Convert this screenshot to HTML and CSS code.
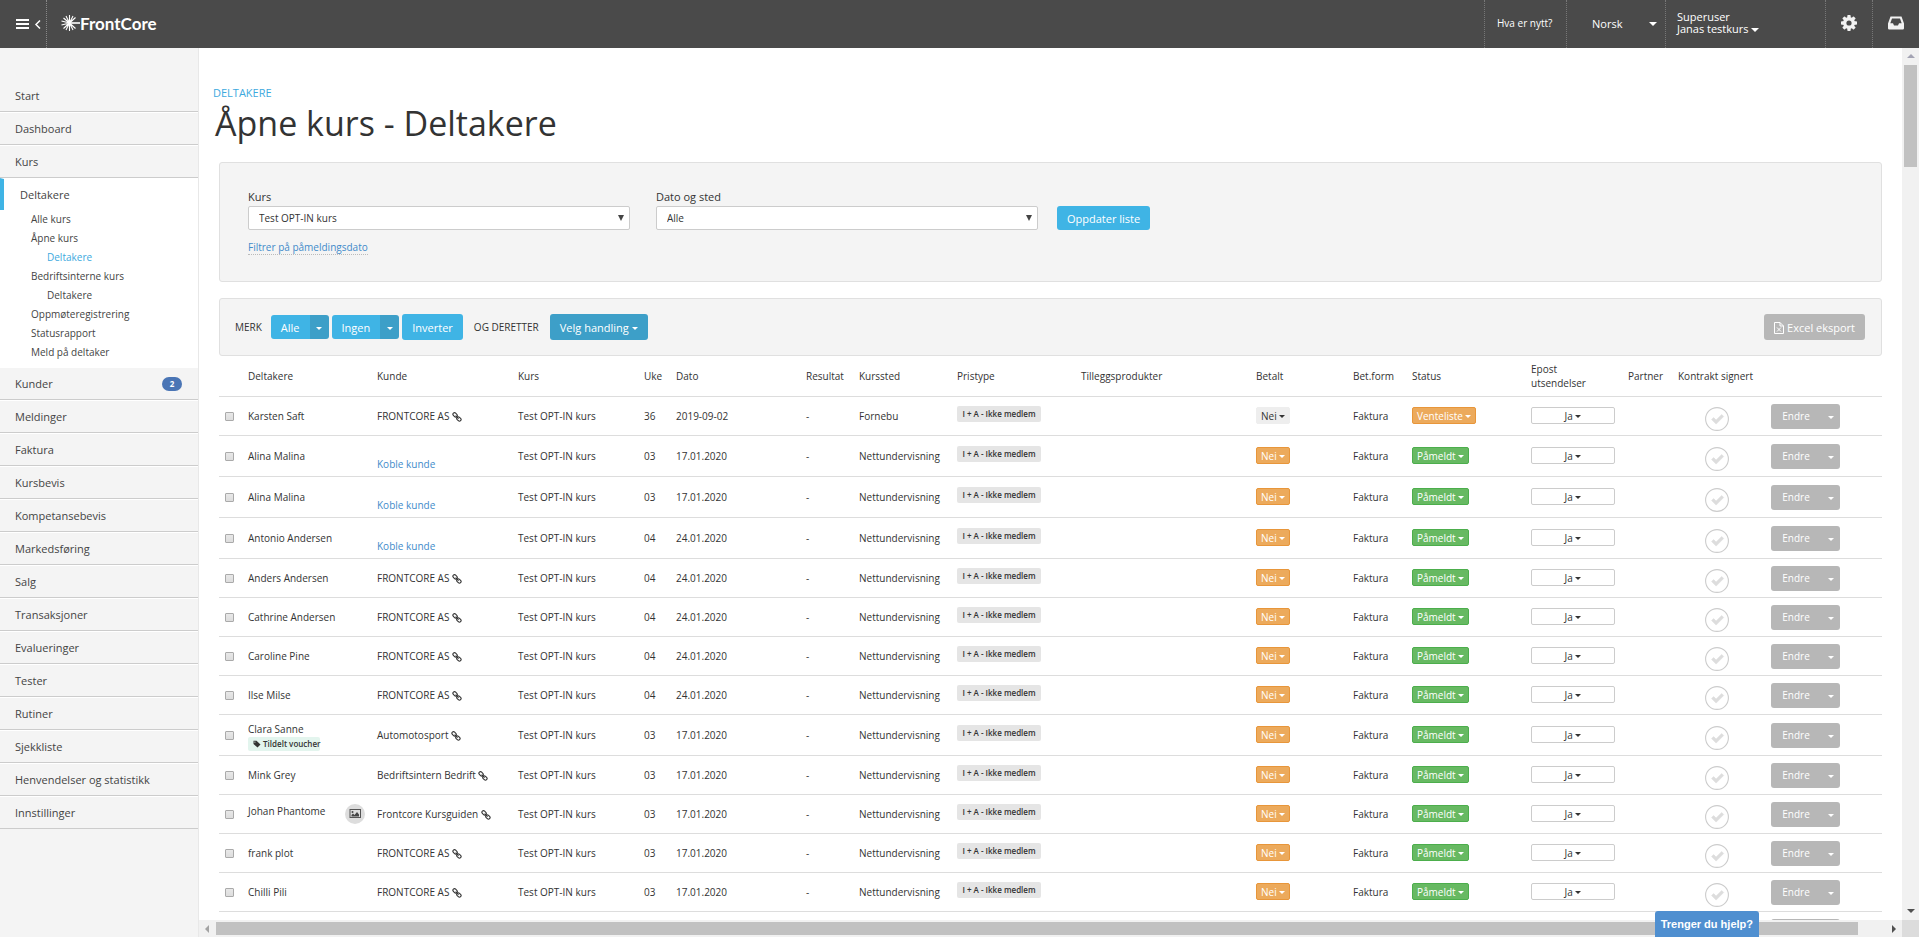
FILE: index.html
```html
<!DOCTYPE html>
<html lang="no">
<head>
    <meta charset="UTF-8">
    <meta name="viewport" content="width=device-width, initial-scale=1.0">
    <title>FrontCore - Deltakere</title>
    <link rel="stylesheet" href="styles.css">
</head>
<body>
    <!-- icons -->
    <svg class="sprite" aria-hidden="true">
        <symbol id="link" viewBox="0 0 10 10">
            <g fill="none" stroke="currentColor" stroke-width="1.1">
                <rect x="0.7" y="1.3" width="4.8" height="3.2" rx="1.6" transform="rotate(45 3.1 2.9)"/>
                <rect x="4.5" y="5.4" width="4.8" height="3.2" rx="1.6" transform="rotate(45 6.9 7)"/>
                <path d="M3.6 3.6l3 3"/>
            </g>
        </symbol>
        <symbol id="check" viewBox="0 0 24 24">
            <circle cx="12" cy="12" r="11.4" fill="none" stroke="#ccc" stroke-width="1.1"/>
            <path d="M6.6 12.6l2-2 2.5 2.5 5.6-5.6 2 2-7.6 7.6z" fill="#ddd" stroke="#ddd" stroke-width="0.6"/>
        </symbol>
        <symbol id="tag" viewBox="0 0 8 8">
            <path d="M0.5 0.8h3l4 3.6-3 3.2L0.5 4z" fill="currentColor"/>
            <circle cx="1.9" cy="2.1" r="0.6" fill="#e3f5ee"/>
        </symbol>
        <symbol id="picture" viewBox="0 0 20 20">
            <circle cx="10" cy="10" r="10" fill="#ddd"/>
            <rect x="5" y="5.5" width="10.5" height="8" fill="none" stroke="#555"/>
            <circle cx="7.5" cy="8" r="1" fill="#444"/>
            <path d="M6.5 12.5v-1.5l1.5-1.5 1.5 1.5 2.5-3 2 2.5v2z" fill="#444"/>
        </symbol>
    </svg>

    <header class="topbar">
        <button type="button" class="menu-toggle" aria-label="Meny">
            <svg width="25" height="12" viewBox="0 0 25 12"><path d="M0 2h13M0 6h13M0 10h13" stroke="#fff" stroke-width="2"/><path d="M24 2.500l-4 4 4 4" fill="none" stroke="#fff" stroke-width="1.500"/></svg>
        </button>
        <a href="#" class="logo">
            <svg width="19" height="18" viewBox="0 0 19 18">
                <g stroke="#fff" stroke-width="1.1" fill="none">
                    <path d="M8.500 9L8.500 1M8.500 9L12 2M8.500 9L14.500 3.500M8.500 9L5 2M8.500 9L2.500 4M8.500 9L0.500 7M8.500 9L0.500 11M8.500 9L2.500 14.500M8.500 9L5 16M8.500 9L8.500 17M8.500 9L12 16M8.500 9L14.500 14.500"/>
                    <path d="M8.500 9H19" stroke-width="1.6"/>
                </g>
            </svg>
            <span>FrontCore</span>
        </a>
        <nav class="topnav">
            <a href="#" class="news">Hva er nytt?</a>
            <div class="language">
                <select aria-label="Språk"><option>Norsk</option></select>
            </div>
            <button type="button" class="user"><span>Superuser</span><span>Janas testkurs <i class="caret"></i></span></button>
            <a href="#" class="tool" aria-label="Innstillinger">
                <svg width="16" height="16" viewBox="0 0 16 16"><g fill="#f2f2f2"><circle cx="8" cy="8" r="6"/><g id="teeth"><rect x="6.300" y="0" width="3.400" height="16" rx="0.800"/><rect x="0" y="6.300" width="16" height="3.400" rx="0.800"/></g><use href="#teeth" transform="rotate(45 8 8)"/></g><circle cx="8" cy="8" r="2.600" fill="#4a4a4a"/></svg>
            </a>
            <a href="#" class="tool" aria-label="Innboks">
                <svg width="16" height="14" viewBox="0 0 16 14"><path fill="#f2f2f2" fill-rule="evenodd" d="M2.500 0.500h11L16 7.500v4.800q0 1.200-1.200 1.200H1.200Q0 13.500 0 12.300V7.500zM4 2.500L2.300 7.300H5l1 2.200h4l1-2.200h2.700L12 2.500z"/></svg>
            </a>
        </nav>
    </header>

    <div class="layout">
        <aside class="sidebar">
            <ul class="menu">
                <li><a href="#">Start</a></li>
                <li><a href="#">Dashboard</a></li>
                <li><a href="#">Kurs</a></li>
                <li class="open">
                    <a href="#">Deltakere</a>
                    <ul class="submenu">
                        <li><a href="#">Alle kurs</a></li>
                        <li><a href="#">Åpne kurs</a></li>
                        <li class="nested"><a href="#" class="current">Deltakere</a></li>
                        <li><a href="#">Bedriftsinterne kurs</a></li>
                        <li class="nested"><a href="#">Deltakere</a></li>
                        <li><a href="#">Oppmøteregistrering</a></li>
                        <li><a href="#">Statusrapport</a></li>
                        <li><a href="#">Meld på deltaker</a></li>
                    </ul>
                </li>
                <li><a href="#">Kunder <span class="badge">2</span></a></li>
                <li><a href="#">Meldinger</a></li>
                <li><a href="#">Faktura</a></li>
                <li><a href="#">Kursbevis</a></li>
                <li><a href="#">Kompetansebevis</a></li>
                <li><a href="#">Markedsføring</a></li>
                <li><a href="#">Salg</a></li>
                <li><a href="#">Transaksjoner</a></li>
                <li><a href="#">Evalueringer</a></li>
                <li><a href="#">Tester</a></li>
                <li><a href="#">Rutiner</a></li>
                <li><a href="#">Sjekkliste</a></li>
                <li><a href="#">Henvendelser og statistikk</a></li>
                <li><a href="#">Innstillinger</a></li>
            </ul>
        </aside>

        <div class="viewport">
            <main class="content">
                <a href="#" class="crumb">DELTAKERE</a>
                <h1>Åpne kurs - Deltakere</h1>

                <form class="panel filter">
                    <div class="field">
                        <label for="kurs">Kurs</label>
                        <div class="select"><select id="kurs"><option>Test OPT-IN kurs</option></select></div>
                        <a href="#" class="filter-link">Filtrer på påmeldingsdato</a>
                    </div>
                    <div class="field">
                        <label for="dato">Dato og sted</label>
                        <div class="select"><select id="dato"><option>Alle</option></select></div>
                    </div>
                    <button type="button" class="btn small">Oppdater liste</button>
                </form>

                <div class="panel actions">
                    <span class="merk">MERK</span>
                    <div class="group">
                        <button type="button" class="btn small">Alle</button><button type="button" class="btn small dark" aria-label="Alle, valg"><i class="caret"></i></button>
                    </div>
                    <div class="group">
                        <button type="button" class="btn small">Ingen</button><button type="button" class="btn small dark" aria-label="Ingen, valg"><i class="caret"></i></button>
                    </div>
                    <button type="button" class="btn">Inverter</button>
                    <span class="deretter">OG DERETTER</span>
                    <button type="button" class="btn dark">Velg handling <i class="caret"></i></button>
                    <button type="button" class="btn gray excel"><svg width="10" height="12" viewBox="0 0 10 12"><path d="M0.500 0.500h5.500l3.500 3.500v7.500h-9zM6 0.500v3.500h3.500M3 5.500l4 4M7 5.500l-4 4" fill="none" stroke="#fff"/></svg> Excel eksport</button>
                </div>

                <table>
                    <colgroup>
                        <col class="c-check"><col class="c-name"><col class="c-kunde"><col class="c-kurs"><col class="c-uke"><col class="c-dato"><col class="c-resultat"><col class="c-sted"><col class="c-pris"><col class="c-tillegg"><col class="c-betalt"><col class="c-form"><col class="c-status"><col class="c-epost"><col class="c-partner"><col class="c-signert"><col>
                    </colgroup>
                    <thead>
                        <tr>
                            <th></th>
                            <th>Deltakere</th>
                            <th>Kunde</th>
                            <th>Kurs</th>
                            <th>Uke</th>
                            <th>Dato</th>
                            <th>Resultat</th>
                            <th>Kurssted</th>
                            <th>Pristype</th>
                            <th>Tilleggsprodukter</th>
                            <th>Betalt</th>
                            <th>Bet.form</th>
                            <th>Status</th>
                            <th>Epost<br>utsendelser</th>
                            <th>Partner</th>
                            <th>Kontrakt signert</th>
                            <th></th>
                        </tr>
                    </thead>
                    <tbody id="rows"></tbody>
                </table>
            </main>
            <div class="vscroll"><i class="arrow up"></i><div class="thumb"></div><i class="arrow down"></i></div>
            <div class="hscroll"><i class="arrow left"></i><div class="thumb"></div><i class="arrow right"></i></div>
            <div class="corner"></div>
        </div>
    </div>

    <button type="button" class="help">Trenger du hjelp?</button>

    <script src="script.js"></script>
</body>
</html>
```

FILE: styles.css
```css
* {
    margin: 0;
    padding: 0;
    box-sizing: border-box;
}
body {
    height: 100vh;
    display: flex;
    flex-direction: column;
    overflow: hidden;
    font-family: "Open Sans", sans-serif;
    font-size: 11px;
    color: #333;
    background: #fff;
}
button, select {
    font-family: inherit;
    font-size: inherit;
    color: inherit;
    border: none;
    background: none;
}
a {
    color: inherit;
    text-decoration: none;
}
ul {
    list-style: none;
}
.sprite {
    display: none;
}
.caret {
    display: inline-block;
    border: 3px solid transparent;
    border-top-color: currentColor;
    border-bottom: none;
    vertical-align: middle;
}

/* top bar */
.topbar {
    flex: none;
    display: flex;
    height: 48px;
    background: #4a4a4a;
    color: #fff;
}
.menu-toggle {
    width: 47px;
    padding-left: 10px;
    border-right: 1px dotted #888;
}
.menu-toggle svg {
    display: block;
    margin: 0 auto;
}
.logo {
    display: flex;
    align-items: center;
    padding: 0 0 2px 14px;
    font-family: Lato, sans-serif;
    font-size: 17px;
    font-weight: bold;
}
.topnav {
    display: flex;
    margin-left: auto;
}
.topnav > * {
    display: flex;
    align-items: center;
    border-left: 1px dotted #777;
}
.news {
    width: 82px;
    padding: 0 0 3px 12px;
    font-size: 10px;
}
.language {
    position: relative;
    width: 99px;
}
.language select {
    appearance: none;
    width: 100%;
    padding: 0 0 2px 25px;
}
.language::after {
    content: "";
    position: absolute;
    right: 8px;
    top: 22px;
    border: 4px solid transparent;
    border-top-color: #fff;
    border-bottom: none;
    pointer-events: none;
}
.topnav .user {
    width: 160px;
    flex-direction: column;
    align-items: flex-start;
    padding: 11px 0 0 11px;
    line-height: 12px;
    text-align: left;
}
.user .caret {
    border-width: 4px 4px 0;
}
.tool {
    width: 47px;
    padding-bottom: 2px;
    justify-content: center;
}

/* side menu */
.layout {
    flex: 1;
    display: flex;
    min-height: 0;
}
.sidebar {
    flex: none;
    width: 199px;
    padding-top: 31px;
    overflow: hidden;
    background: #f4f4f4;
    border-right: 1px solid #e8e8e8;
    color: #444;
    font-weight: 500;
}
.menu > li > a {
    display: flex;
    align-items: center;
    height: 33px;
    padding: 0 16px 0 15px;
    border-top: 1px solid #fff;
    border-bottom: 1px solid #ccc;
}
.menu > li:first-child > a {
    border-top-color: #f4f4f4;
}
.menu > .open {
    background: #fff;
    padding-bottom: 5px;
}
.menu > .open > a {
    height: 32px;
    border-bottom: none;
    border-left: 4px solid #3fb4e5;
    padding-left: 16px;
}
.submenu {
    font-size: 10px;
    line-height: 19px;
    padding-left: 31px;
}
.submenu .nested {
    padding-left: 16px;
}
.submenu .current {
    color: #3da9de;
}
.badge {
    margin-left: auto;
    width: 20px;
    line-height: 14px;
    border-radius: 7px;
    background: #4a75b5;
    color: #fff;
    font-size: 8px;
    font-weight: bold;
    text-align: center;
}

/* scroll area */
.viewport {
    flex: 1;
    min-width: 0;
    display: grid;
    grid-template-columns: 1fr 17px;
    grid-template-rows: 1fr 17px;
}
.content {
    min-width: 0;
    min-height: 0;
    overflow: hidden;
    padding: 37px 20px 0 20px;
}
.vscroll, .hscroll {
    display: flex;
    align-items: center;
    background: #f1f1f1;
}
.vscroll {
    flex-direction: column;
}
.vscroll .thumb {
    width: 13px;
    height: 102px;
    margin: 7px 0 auto;
    background: #c1c1c1;
}
.hscroll .thumb {
    flex: 1;
    height: 13px;
    margin: 0 34px 0 7px;
    background: #c1c1c1;
}
.corner {
    background: #dcdcdc;
}
.arrow {
    border: 4px solid transparent;
}
.arrow.up {
    border-top: none;
    border-bottom-color: #a3a3b3;
    margin-top: 6px;
}
.arrow.down {
    border-bottom: none;
    border-top-color: #505050;
    margin-bottom: 7px;
}
.arrow.left {
    border-left: none;
    border-right-color: #a3a3a3;
    margin-left: 6px;
}
.arrow.right {
    border-right: none;
    border-left-color: #505050;
    margin-right: 6px;
}

/* heading and panels */
.crumb {
    display: block;
    margin-left: -6px;
    line-height: 16px;
    color: #3da9de;
}
h1 {
    margin: 0 0 16px -4px;
    font-size: 34px;
    font-weight: 500;
    line-height: 45px;
}
.panel {
    display: flex;
    background: #f4f4f4;
    border: 1px solid #e0e0e0;
    border-radius: 3px;
}
.filter {
    height: 120px;
    padding: 24px 28px 0;
    margin-bottom: 16px;
}
.field {
    flex: 0 1 382px;
    margin-right: 26px;
}
.field + .btn {
    margin: 19px 0 0 -7px;
}
.field label {
    display: block;
    line-height: 19px;
    font-weight: 500;
}
.select {
    position: relative;
}
.select select {
    appearance: none;
    display: block;
    width: 100%;
    height: 24px;
    padding-left: 10px;
    border: 1px solid #ccc;
    border-radius: 2px;
    background: #fff;
    font-size: 10px;
}
.select::after {
    content: "";
    position: absolute;
    right: 6px;
    top: 9px;
    border: 3px solid transparent;
    border-top: 6px solid #444;
    border-bottom: none;
    pointer-events: none;
}
.filter-link {
    display: inline-block;
    margin-top: 10px;
    line-height: 14px;
    font-size: 10px;
    color: #428bca;
    border-bottom: 1px dotted #bbb;
}
.btn {
    height: 26px;
    padding: 0 10px;
    border-radius: 3px;
    background: #3fb4e5;
    color: #fff;
    white-space: nowrap;
}
.btn.small {
    height: 24px;
}
.btn.dark {
    background: #3d9fc8;
}
.btn.gray {
    background: #b7b7b7;
}
.actions {
    align-items: center;
    height: 58px;
    padding: 0 16px 0 15px;
    gap: 3px;
}
.merk {
    margin-right: 6px;
    font-size: 10px;
}
.deretter {
    margin: 0 8px;
    font-size: 10px;
}
.group {
    display: flex;
}
.group .btn:first-child {
    border-radius: 3px 0 0 3px;
}
.group .btn:last-child {
    width: 19px;
    padding: 0;
    border-radius: 0 3px 3px 0;
}
.excel {
    margin-left: auto;
}
.excel svg {
    vertical-align: -2px;
}

/* table */
table {
    width: 100%;
    table-layout: fixed;
    border-spacing: 0;
}
.c-check { width: 29px; }
.c-name { width: 129px; }
.c-kunde { width: 141px; }
.c-kurs { width: 126px; }
.c-uke { width: 32px; }
.c-dato { width: 130px; }
.c-resultat { width: 53px; }
.c-sted { width: 98px; }
.c-pris { width: 124px; }
.c-tillegg { width: 175px; }
.c-betalt { width: 97px; }
.c-form { width: 59px; }
.c-status { width: 119px; }
.c-epost { width: 97px; }
.c-partner { width: 50px; }
.c-signert { width: 93px; }
th, td {
    height: 39px;
    border-bottom: 1px solid #ddd;
    text-align: left;
    vertical-align: middle;
    white-space: nowrap;
}
td {
    font-size: 10px;
}
th {
    height: 41px;
    font-size: 10px;
    font-weight: 500;
    line-height: 14px;
}
.tall td {
    height: 41px;
}
td input {
    appearance: none;
    display: block;
    width: 9px;
    height: 9px;
    margin-left: 6px;
    border: 1px solid #aaa;
    border-radius: 1px;
    background: linear-gradient(#e8e8e8, #ddd);
}
td svg {
    vertical-align: middle;
}
.connect {
    display: block;
    padding-top: 16px;
    line-height: 14px;
    color: #428bca;
}
.name {
    display: flex;
    justify-content: space-between;
    padding-right: 12px;
}
.with-voucher {
    padding-top: 2px;
    line-height: 15px;
}
.voucher {
    display: block;
    width: 72px;
    padding-left: 5px;
    border-radius: 2px;
    background: #e3f5ee;
    font-size: 8px;
    line-height: 14px;
    font-weight: 600;
}
.price {
    display: inline-block;
    width: 84px;
    margin-bottom: 4px;
    border-radius: 2px;
    background: #e5e5e5;
    font-size: 8px;
    font-weight: 600;
    line-height: 16px;
    text-align: center;
    vertical-align: middle;
}
.pill {
    display: block;
    height: 17px;
    margin-bottom: 1px;
    padding: 0 4px;
    border: 1px solid #e8963a;
    border-radius: 2px;
    background: #ecaa5c;
    color: #fff;
    font-size: 10px;
    line-height: 14px;
}
.pill.plain {
    border-color: #eee;
    background: #eee;
    color: #333;
}
.pill.green {
    border-color: #4cae4c;
    background: #67b962;
}
.pill.wide {
    width: 84px;
    border-color: #ccc;
    background: #fff;
    color: #333;
}
.signed {
    display: block;
    margin: 6px 0 0 27px;
}
.edit {
    display: flex;
}
.edit .btn {
    height: 25px;
}
.edit .btn:first-child {
    width: 50px;
    border-radius: 3px 0 0 3px;
}
.edit .btn:last-child {
    width: 19px;
    padding: 0;
    border-radius: 0 3px 3px 0;
}

.help {
    position: fixed;
    right: 160px;
    bottom: 0;
    height: 26px;
    padding: 0 6px;
    border-radius: 3px 3px 0 0;
    background: #4f8fd0;
    color: #fff;
    font: bold 11px "Liberation Sans", Arial, sans-serif;
}
```

FILE: script.js
```javascript
// name, customer, week, date, place
const participants = [
    ['Karsten Saft', 'FRONTCORE AS', '36', '2019-09-02', 'Fornebu'],
    ['Alina Malina', '', '03', '17.01.2020', 'Nettundervisning'],
    ['Alina Malina', '', '03', '17.01.2020', 'Nettundervisning'],
    ['Antonio Andersen', '', '04', '24.01.2020', 'Nettundervisning'],
    ['Anders Andersen', 'FRONTCORE AS', '04', '24.01.2020', 'Nettundervisning'],
    ['Cathrine Andersen', 'FRONTCORE AS', '04', '24.01.2020', 'Nettundervisning'],
    ['Caroline Pine', 'FRONTCORE AS', '04', '24.01.2020', 'Nettundervisning'],
    ['Ilse Milse', 'FRONTCORE AS', '04', '24.01.2020', 'Nettundervisning'],
    ['Clara Sanne', 'Automotosport', '03', '17.01.2020', 'Nettundervisning', 'voucher'],
    ['Mink Grey', 'Bedriftsintern Bedrift', '03', '17.01.2020', 'Nettundervisning'],
    ['Johan Phantome', 'Frontcore Kursguiden', '03', '17.01.2020', 'Nettundervisning', 'picture'],
    ['frank plot', 'FRONTCORE AS', '03', '17.01.2020', 'Nettundervisning'],
    ['Chilli Pili', 'FRONTCORE AS', '03', '17.01.2020', 'Nettundervisning']
];

function icon(id, size, cls) {
    return `<svg class="${cls || ''}" width="${size}" height="${size}"><use href="#${id}"/></svg>`;
}

function nameCell(name, extra) {
    if (extra === 'voucher') {
        return `<div class="with-voucher">${name}<span class="voucher">${icon('tag', 8)} Tildelt voucher</span></div>`;
    }
    if (extra === 'picture') {
        return `<div class="name"><span>${name}</span>${icon('picture', 20)}</div>`;
    }
    return name;
}

function editButtons(label) {
    return `<div class="edit"><button type="button" class="btn gray" aria-label="Endre">${label}</button><button type="button" class="btn gray" aria-label="Flere valg"><i class="caret"></i></button></div>`;
}

let html = '';
participants.forEach(([name, customer, week, date, place, extra], i) => {
    const waiting = i === 0;
    const tall = extra === 'voucher' || !customer;
    const kunde = customer ? `${customer} ${icon('link', 10)}` : '<a href="#" class="connect">Koble kunde</a>';
    html += `<tr class="${tall ? 'tall' : ''}">
        <td><input type="checkbox" aria-label="Velg ${name}"></td>
        <td>${nameCell(name, extra)}</td>
        <td>${kunde}</td>
        <td>Test OPT-IN kurs</td>
        <td>${week}</td>
        <td>${date}</td>
        <td>-</td>
        <td>${place}</td>
        <td><span class="price">I + A - Ikke medlem</span></td>
        <td></td>
        <td><button type="button" class="pill ${waiting ? 'plain' : ''}">Nei <i class="caret"></i></button></td>
        <td>Faktura</td>
        <td><button type="button" class="pill ${waiting ? '' : 'green'}">${waiting ? 'Venteliste' : 'Påmeldt'} <i class="caret"></i></button></td>
        <td><button type="button" class="pill wide">Ja <i class="caret"></i></button></td>
        <td></td>
        <td>${icon('check', 24, 'signed')}</td>
        <td>${editButtons('Endre')}</td>
    </tr>`;
});
// next row, just peeking in above the scroll bar
html += `<tr><td colspan="16"></td><td>${editButtons('')}</td></tr>`;
document.getElementById('rows').innerHTML = html;
```
